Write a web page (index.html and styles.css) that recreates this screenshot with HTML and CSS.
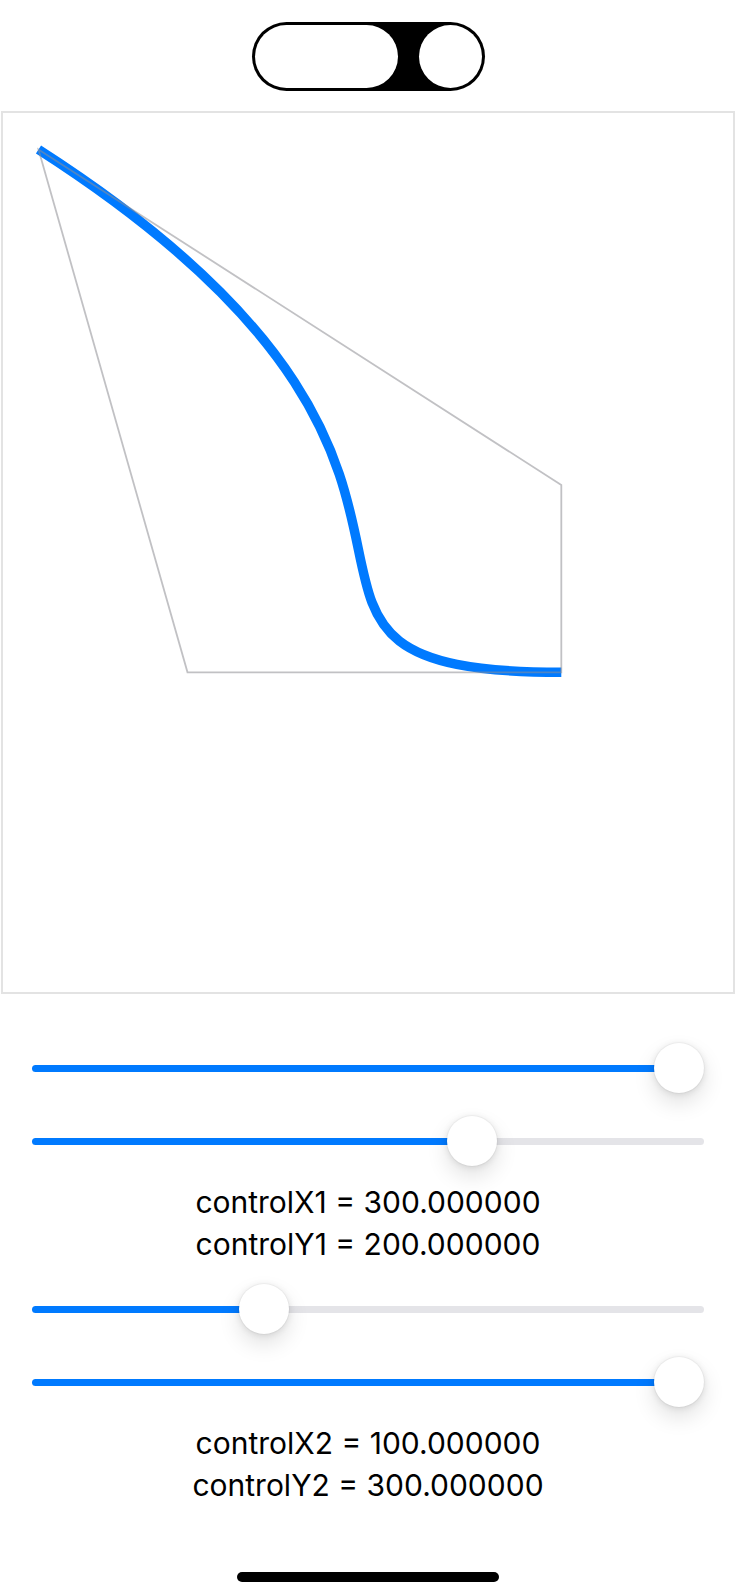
FILE: index.html
```html
<!DOCTYPE html>
<html lang="en">
<head>
    <meta charset="UTF-8">
    <meta name="viewport" content="width=device-width, initial-scale=1.0">
    <title>Bezier Curve</title>
    <link rel="stylesheet" href="styles.css">
</head>
<body>

    <div class="screen">

        <div class="top">
            <div class="toggle">
                <div class="toggle-pill"></div>
                <div class="toggle-knob"></div>
            </div>
        </div>

        <div class="canvas">
            <svg class="curve" viewBox="3 113 730 879" preserveAspectRatio="none">
                <!-- curva -->
                <path d="M38.5 149.5 C561.3 485, 187.5 672.3, 561.3 672.3" fill="none" stroke="#007aff" stroke-width="9.5"/>
                <!-- pontos de controle -->
                <path d="M38.5 149.5 L187.5 672.3 L561.3 672.3 L561.3 485 Z" fill="none" stroke="#8e8e93" stroke-opacity="0.55" stroke-width="1.8"/>
            </svg>
        </div>

        <div class="controls">
            <div class="group">
                <div class="slider">
                    <div class="track-min" style="width: 647px"></div>
                    <div class="thumb"></div>
                    <div class="track-max"></div>
                </div>
                <div class="slider">
                    <div class="track-min" style="width: 439.7px"></div>
                    <div class="thumb"></div>
                    <div class="track-max"></div>
                </div>
                <div class="values">
                    <div>controlX1 = 300.000000</div>
                    <div>controlY1 = 200.000000</div>
                </div>
            </div>

            <div class="group">
                <div class="slider">
                    <div class="track-min" style="width: 232.3px"></div>
                    <div class="thumb"></div>
                    <div class="track-max"></div>
                </div>
                <div class="slider">
                    <div class="track-min" style="width: 647px"></div>
                    <div class="thumb"></div>
                    <div class="track-max"></div>
                </div>
                <div class="values">
                    <div>controlX2 = 100.000000</div>
                    <div>controlY2 = 300.000000</div>
                </div>
            </div>
        </div>

        <div class="home-bar"></div>

    </div>

</body>
</html>
```

FILE: styles.css
```css
body {
    font-family: 'Inter', 'Liberation Sans', sans-serif;
    background-color: #ffffff;
    margin: 0;
    padding: 0;
}

.screen {
    width: 736px;
    height: 1596px;
    overflow: hidden;
    display: flex;
    flex-direction: column;
}

.top {
    display: flex;
    justify-content: center;
    padding-top: 22px;
    padding-left: 1px;
}

.toggle {
    display: flex;
    gap: 21px;
    padding: 3px;
    background-color: #000;
    border-radius: 35px;
}

.toggle-pill {
    width: 143px;
    height: 63px;
    border-radius: 32px;
    background-color: #fff;
}

.toggle-knob {
    width: 63px;
    height: 63px;
    border-radius: 50%;
    background-color: #fff;
}

.canvas {
    margin: 20px 0 0 1px;
    width: 730px;
    height: 879px;
    border: 2px solid #e3e3e3;
}

.curve {
    display: block;
    width: 730px;
    height: 879px;
}

.controls {
    padding: 49px 32px 0 32px;
    display: flex;
    flex-direction: column;
    gap: 19px;
}

.group {
    display: flex;
    flex-direction: column;
    gap: 23px;
}

.slider {
    display: flex;
    align-items: center;
    height: 50px;
}

.track-min,
.track-max {
    height: 7px;
    border-radius: 4px;
}

.track-min {
    background-color: #007aff;
    flex-shrink: 0;
}

.track-max {
    flex: 1;
    background-color: #e4e4e8;
}

.thumb {
    position: relative;
    z-index: 1;
    flex-shrink: 0;
    width: 50px;
    height: 50px;
    margin: 0 -25px;
    border-radius: 50%;
    background-color: #fff;
    box-shadow: 0 0 0 1px rgba(0, 0, 0, 0.03), 0 1px 7px rgba(0, 0, 0, 0.1), 0 10px 22px rgba(0, 0, 0, 0.12);
}

.values {
    margin-top: -8px;
    text-align: center;
    font-size: 30px;
    line-height: 42px;
    color: #000;
}

.home-bar {
    margin: auto auto 14px auto;
    width: 262px;
    height: 10px;
    border-radius: 5px;
    background-color: #000;
}
```
